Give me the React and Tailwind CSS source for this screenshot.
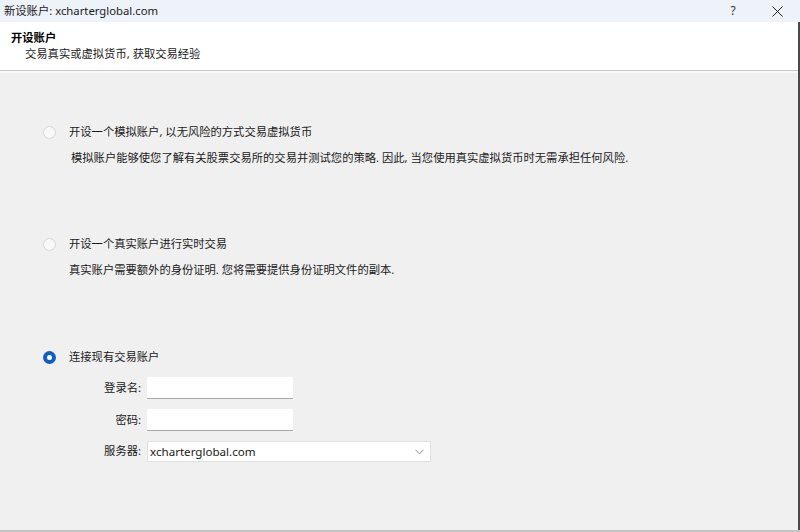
import React from 'react'

const font = { fontFamily: '"Segoe UI", "Noto Sans", "Noto Sans CJK SC", sans-serif' }

function Radio({ checked }) {
  if (checked) {
    return (
      <span className="w-[13px] h-[13px] rounded-full bg-[#0f5fc2] flex items-center justify-center shrink-0">
        <span className="w-[5px] h-[5px] rounded-full bg-white" />
      </span>
    )
  }
  return <span className="w-[13px] h-[13px] rounded-full border border-[#d6d6d6] bg-[#f8f8f8] shrink-0" />
}

function Option({ checked, title, desc, descIndent }) {
  return (
    <div className="flex flex-col">
      <div className="flex items-center h-[18px] pl-[43px]">
        <Radio checked={checked} />
        <span className="ml-[13px] text-[11.3px] text-[#1a1a1a] leading-[18px]">{title}</span>
      </div>
      {desc && (
        <div className={`mt-[8px] text-[11.3px] text-[#1a1a1a] leading-[18px] ${descIndent}`}>{desc}</div>
      )}
    </div>
  )
}

function Field({ label, children }) {
  return (
    <div className="flex items-center">
      <span className="w-[147px] text-right pr-[6px] text-[11.3px] text-[#1a1a1a]">{label}</span>
      {children}
    </div>
  )
}

export default function App() {
  return (
    <div className="w-[800px] h-[532px] flex flex-col bg-[#f0f0f0] overflow-hidden" style={font}>
      <div className="h-[22px] bg-[#eef2f9] flex items-center px-[4px] text-[11.3px] text-[#1a1a1a] shrink-0">
        <span className="flex-1">新设账户: xcharterglobal.com</span>
        <span className="w-[12px] text-center mr-[33px] text-[12px] text-[#333]">?</span>
        <svg width="11" height="11" viewBox="0 0 11 11" className="mr-[13px]">
          <path d="M0.5 0.5 L10.5 10.5 M10.5 0.5 L0.5 10.5" stroke="#222" strokeWidth="1" />
        </svg>
      </div>
      <div className="flex flex-1 min-h-0">
        <div className="flex-1 flex flex-col">
          <div className="h-[48px] bg-white flex flex-col justify-center px-[11px] shrink-0">
            <div className="text-[11.3px] font-bold text-black leading-[16px]">开设账户</div>
            <div className="text-[11.3px] text-[#1a1a1a] leading-[16px] pl-[14px]">交易真实或虚拟货币, 获取交易经验</div>
          </div>
          <div className="h-[3px] border-t border-[#c8c8c8] bg-[#f8f8f8] shrink-0" />
          <div className="flex-1 flex flex-col pt-[50px]">
            <Option
              title="开设一个模拟账户, 以无风险的方式交易虚拟货币"
              desc="模拟账户能够使您了解有关股票交易所的交易并测试您的策略. 因此, 当您使用真实虚拟货币时无需承担任何风险."
              descIndent="pl-[71px]"
            />
            <div className="mt-[68px]">
              <Option
                title="开设一个真实账户进行实时交易"
                desc="真实账户需要额外的身份证明. 您将需要提供身份证明文件的副本."
                descIndent="pl-[69px]"
              />
            </div>
            <div className="mt-[69px]">
              <Option checked title="连接现有交易账户" />
            </div>
            <div className="flex flex-col gap-[10px] mt-[11px]">
              <Field label="登录名:">
                <div className="w-[146px] h-[22px] bg-white border-b border-[#a8a8a8]" />
              </Field>
              <Field label="密码:">
                <div className="w-[146px] h-[22px] bg-white border-b border-[#a8a8a8]" />
              </Field>
              <Field label="服务器:">
                <div className="w-[284px] h-[21px] bg-white border border-[#e0e0e0] flex items-center pl-[2px] pr-[6px]">
                  <span className="flex-1 text-[11.6px] text-[#1a1a1a]">xcharterglobal.com</span>
                  <svg width="9" height="6" viewBox="0 0 9 6">
                    <path d="M0.5 0.8 L4.5 4.8 L8.5 0.8" fill="none" stroke="#8a8a8a" strokeWidth="1" />
                  </svg>
                </div>
              </Field>
            </div>
            <div className="flex-1" />
          </div>
        </div>
        <div className="w-[2px] bg-[#4a4a4a] shrink-0" />
      </div>
      <div className="h-[2px] bg-[#c4c4c4] shrink-0" />
    </div>
  )
}
